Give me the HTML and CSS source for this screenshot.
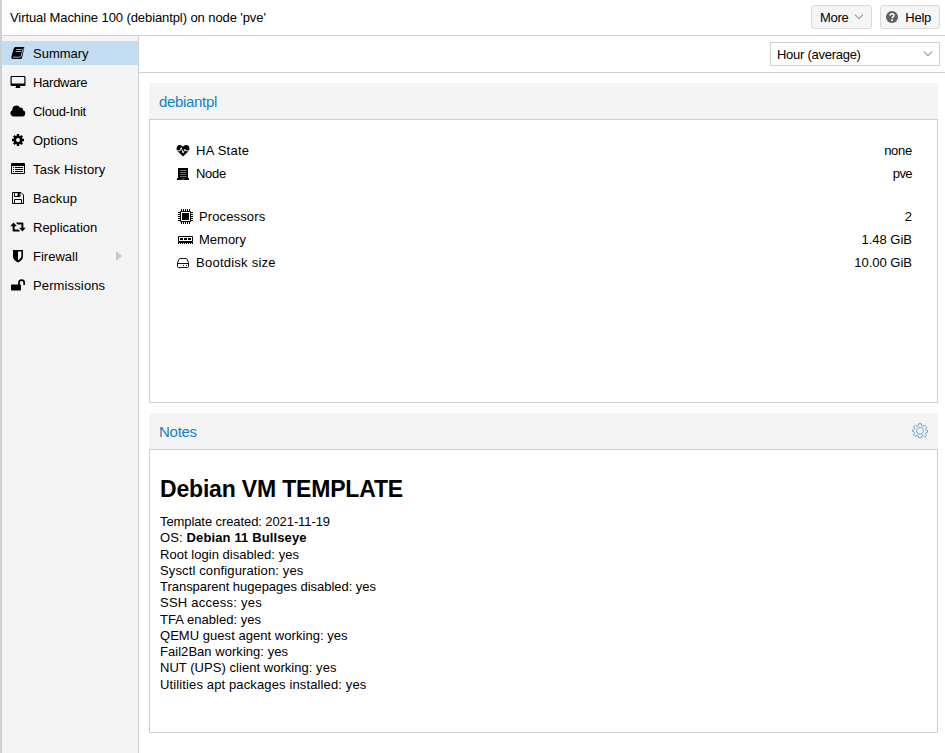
FILE: index.html
```html
<!DOCTYPE html>
<html lang="en">
<head>
<meta charset="utf-8">
<title>Virtual Machine 100</title>
<link rel="stylesheet" href="styles.css">
</head>
<body>
<div class="app">
  <header class="topbar">
    <h1 class="title">Virtual Machine 100 (debiantpl) on node 'pve'</h1>
    <button class="btn btn-more"><span class="tight">More</span> <svg width="10" height="6" viewBox="0 0 10 6"><path class="chev" d="M1 .7l4 4 4-4"/></svg></button>
    <button class="btn btn-help"><svg width="12" height="12" viewBox="0 0 12 12"><circle cx="6" cy="6" r="6" fill="#606060"/><path d="M4 4.6C4.1 2.3 8 2.3 8 4.5 8 6 6.1 5.8 6.1 7.3" fill="none" stroke="#f5f5f5" stroke-width="1.6"/><path d="M5.2 8.2h1.8v1.7H5.2z" fill="#f5f5f5"/></svg><span class="tight">Help</span></button>
  </header>
  <div class="main">
    <nav class="side">
      <a class="item active"><svg class="ico" viewBox="0 0 16 14"><path d="M5.5 1h8.2q.8 0 .6.8L12 11.7q-.3 1.3-1.6 1.3H3Q1 13 1.300 11l2.400-8.500Q4.100 1 5.500 1z"/><path class="cut-blue" d="M6.200 3.500h5.600M5.600 5.500h5.600M3 11.200h7q.8 0 1-.8l2.200-8"/></svg><span>Summary</span></a>
      <a class="item"><svg class="ico" viewBox="0 0 16 14"><path fill-rule="evenodd" d="M1.500 1h13q1 0 1 1v8q0 1-1 1H10v1.200l1 .8H5l1-.8V11H1.500q-1 0-1-1V2q0-1 1-1zM1.700 2v6.500h12.600V2z"/></svg><span class="tight">Hardware</span></a>
      <a class="item"><svg class="ico" viewBox="0 0 16 14"><path d="M3.700 12.500A3.400 3.400 0 0 1 2.400 6 4 4 0 0 1 9.900 3.700 2.200 2.200 0 0 1 12.900 6.200 3.200 3.200 0 0 1 12.500 12.500z"/></svg><span class="tight">Cloud-Init</span></a>
      <a class="item"><svg class="ico" viewBox="0 0 16 14"><circle cx="8" cy="7" r="3.200" fill="none" stroke="#000" stroke-width="2.500"/><path d="M8 1v2.500M8 10.500V13M2 7h2.500M11.500 7H14M3.800 2.800l1.700 1.700M10.500 9.500l1.700 1.700M12.200 2.800l-1.700 1.700M5.500 9.500l-1.700 1.700" stroke="#000" stroke-width="2.400" fill="none"/></svg><span>Options</span></a>
      <a class="item"><svg class="ico" viewBox="0 0 16 14"><path fill-rule="evenodd" d="M2 1h12q1 0 1 1v9q0 1-1 1H2q-1 0-1-1V2q0-1 1-1zM2 4v7h12V4z"/><path d="M3 5h1v1H3zM5 5h8v1H5zM3 7h1v1H3zM5 7h8v1H5zM3 9h1v1H3zM5 9h8v1H5z"/></svg><span class="loose">Task History</span></a>
      <a class="item"><svg class="ico" viewBox="0 0 16 14"><path class="line" d="M2.500 1.500h8.500l2.500 2.500v8.500h-11zM4.500 12V8.500h7V12M4.500 1.500v4h5.500v-4"/><path d="M7.500 2h2v3h-2z"/></svg><span class="loose">Backup</span></a>
      <a class="item"><svg class="ico" viewBox="0 0 16 14"><path d="M3.500 2.500L7 6.200H4.600V9.500H8.500l1.700 2H3.500q-.9 0-.9-.9V6.200H.2zM5.800 2.500h6.700q.9 0 .9.900v4.400h2.400L12.400 11.500 9 7.800h2.400V4.500H7.500z"/></svg><span>Replication</span></a>
      <a class="item"><svg class="ico" viewBox="0 0 16 14"><path fill-rule="evenodd" d="M3 1h10v6.500Q13 11 8 13.400 3 11 3 7.500zM8 2.600v8.900Q11.400 9.500 11.400 7.300V2.600z"/></svg><span>Firewall</span><i class="arrow"></i></a>
      <a class="item"><svg class="ico" viewBox="0 0 16 14"><path d="M1.700 6.500h8.600q.7 0 .7.700v4.600q0 .7-.7.700H1.700q-.7 0-.7-.7V7.200q0-.7.700-.7z"/><path d="M9 7V4.700a2.600 2.600 0 0 1 5.200 0V7" fill="none" stroke="#000" stroke-width="1.700"/></svg><span class="loose">Permissions</span></a>
    </nav>
    <div class="content">
      <div class="toolbar">
        <div class="select"><span class="tight">Hour (average)</span><svg width="10" height="6" viewBox="0 0 10 6"><path class="chev" d="M1 .7l4 4 4-4"/></svg></div>
      </div>
      <div class="panels">
        <section class="panel">
          <div class="phead"><span class="name">debiantpl</span></div>
          <div class="pbody status">
            <div class="row"><svg class="sico" width="14" height="14" viewBox="0 0 14 14"><path d="M7 12.500L1.500 7.200C-.5 5 .8 1 3.700 1 5.300 1 6.200 1.800 7 2.700 7.800 1.800 8.700 1 10.300 1c2.900 0 4.200 4 2.200 6.200z"/><path d="M0 6.800h4l1.200-3.200 1.900 5.400L8.800 5.200l.8 1.600H14" fill="none" stroke="#fff" stroke-width=".9"/></svg><span class="looser">HA State</span><b class="tight">none</b></div>
            <div class="row"><svg class="sico" width="14" height="14" viewBox="0 0 14 14"><path d="M2 1h10v10h1v2H1v-2h1z"/><path d="M4 3.500h6.500M4 5.500h6.500M4 7.500h6.500M4 9.500h6.500M5.500 12h3" stroke="#888" stroke-width=".8"/></svg><span class="tight">Node</span><b class="tighter">pve</b></div>
            <div class="row gap"><svg class="sico wide" width="16" height="16" viewBox="0 0 16 16"><path d="M4 4h7v7H4z"/><path class="line" d="M2.500 2.500h10v10h-10z"/><path class="line" d="M3.500 0v2M5.500 0v2M7.500 0v2M9.500 0v2M11.500 0v2M3.500 13v2M5.500 13v2M7.500 13v2M9.500 13v2M11.500 13v2M0 3.500h2M0 5.500h2M0 7.500h2M0 9.500h2M0 11.500h2M13 3.500h2M13 5.500h2M13 7.500h2M13 9.500h2M13 11.500h2"/></svg><span class="loose">Processors</span><b>2</b></div>
            <div class="row"><svg class="sico wide" width="16" height="16" viewBox="0 0 16 16"><path class="line" d="M.5 4.500h14v5H.5z"/><path d="M2 6h3v2H2zM6 6h3v2H6zM10 6h3v2h-3zM0 10h1v2H0zM2 10h1v2H2zM4 10h1v2H4zM6 10h1v2H6zM8 10h1v2H8zM10 10h1v2h-1zM12 10h1v2h-1zM14 10h1v2h-1zM0 10h15v1H0z"/></svg><span>Memory</span><b>1.48 GiB</b></div>
            <div class="row"><svg class="sico" width="14" height="14" viewBox="0 0 14 14"><path d="M1.500 6.500L3.200 3Q3.400 2.500 4 2.500h6q.6 0 .8.500l1.700 3.500v4q0 1-1 1h-9q-1 0-1-1zM1.500 7.500h11" fill="none" stroke="#111" stroke-width="1"/><path d="M7 9h1v1H7zM10 9h1v1h-1z"/></svg><span class="looser">Bootdisk size</span><b>10.00 GiB</b></div>
          </div>
        </section>
        <section class="panel">
          <div class="phead"><span class="tight">Notes</span><svg class="gear" width="16" height="16" viewBox="0 0 16 16"><path d="M6.700.7h2.600l.4 2 1.300.5 1.700-1.100 1.900 1.900-1.100 1.700.5 1.300 1.500.3v1.900l-1.500.4-.5 1.400 1.100 1.600-1.900 1.800L11 12.300l-1.300.6-.4 2H6.700l-.4-2-1.400-.6-1.600 1.100-1.900-1.800 1.100-1.700L2 8.700.5 8.400V7.100l1.500-.4.500-1.400L1.400 4l1.900-1.900 1.600 1.100 1.400-.5z"/><circle cx="8" cy="7.800" r="3.500"/></svg></div>
          <div class="pbody notes">
            <h2>Debian VM TEMPLATE</h2>
            <p><span class="close">Template created: 2021-11-19</span><br><span class="loose">OS: <strong>Debian 11 Bullseye</strong></span><br>Root login disabled: yes<br><span class="loose">Sysctl configuration: yes</span><br><span class="flat">Transparent hugepages disabled: yes</span><br><span class="looser">SSH access: yes</span><br>TFA enabled: yes<br>QEMU guest agent working: yes<br>Fail2Ban working: yes<br>NUT (UPS) client working: yes<br><span class="loose">Utilities apt packages installed: yes</span></p>
          </div>
        </section>
      </div>
    </div>
  </div>
</div>
</body>
</html>
```
FILE: styles.css
```css
* { box-sizing: border-box; }
body { margin: 0; background: #fff; color: #000; font: 13px/17px "Liberation Sans", Arial, sans-serif; }
.app { height: 753px; border-left: 2px solid #cfcfcf; display: flex; flex-direction: column; overflow: hidden; }
.topbar { height: 36px; flex: none; border-bottom: 1px solid #cfcfcf; display: flex; align-items: center; gap: 8px; padding: 0 5px 1px 8px; }
.title { flex: 1; margin: 0; font-size: 13px; font-weight: normal; letter-spacing: -.09px; }
.tight { letter-spacing: -.27px; }
.tighter { letter-spacing: -.6px; }
.close { letter-spacing: -.09px; }
.flat { letter-spacing: -.03px; }
.loose { letter-spacing: .13px; }
.looser { letter-spacing: .25px; }
.btn { height: 24px; border: 1px solid #d8d8d8; border-radius: 3px; background: #f5f5f5; font: inherit; color: #000; display: flex; align-items: center; justify-content: space-between; }
.btn-more { width: 61px; padding: 0 7px 0 8px; }
.btn-help { width: 60px; padding: 0 8px 0 5px; }
.chev { fill: none; stroke: #999; stroke-width: 1.2; }
.main { flex: 1; display: flex; min-height: 0; }
.side { width: 137px; flex: none; background: #f4f4f4; border-right: 1px solid #cfcfcf; padding-top: 5px; display: flex; flex-direction: column; gap: 5px; }
.item { height: 24px; display: flex; align-items: center; gap: 7px; padding-left: 8px; }
.active { background: #c2dcf1; }
.ico { width: 16px; height: 14px; flex: none; }
.line { fill: none; stroke: #000; stroke-width: 1; }
.cut-blue { fill: none; stroke: #c2dcf1; stroke-width: .8; }
.arrow { margin-left: auto; margin-right: 16px; border: 5px solid transparent; border-left: 6px solid #c8c8c8; border-right: 0; }
.content { flex: 1; display: flex; flex-direction: column; }
.toolbar { height: 37px; border-bottom: 1px solid #cfcfcf; display: flex; justify-content: flex-end; align-items: center; padding: 0 5px 0 0; }
.select { width: 170px; height: 24px; border: 1px solid #cfcfcf; display: flex; align-items: center; justify-content: space-between; padding: 0 6px; }
.select svg { margin-bottom: 1px; }
.panels { padding: 10px 7px 0 10px; display: flex; flex-direction: column; gap: 10px; }
.panel { height: 320px; display: flex; flex-direction: column; }
.phead { height: 36px; flex: none; background: #f4f4f4; color: #157fcc; font-size: 15px; line-height: 20px; padding: 1px 10px 0; display: flex; align-items: center; justify-content: space-between; }
.name { letter-spacing: -.33px; }
.gear { fill: none; stroke: #69a8dc; stroke-width: 1; margin-bottom: 2px; }
.pbody { flex: 1; border: 1px solid #cfcfcf; }
.status { padding: 19px 25px 0 26px; }
.row { height: 23px; display: flex; align-items: center; }
.row b { margin-left: auto; font-weight: normal; }
.sico { margin-right: 6px; }
.wide { margin: 0 4px 0 2px; }
.row .wide + span { margin-left: 1px; }
.gap { margin-top: 20px; }
.notes { padding: 25px 10px; line-height: 16.25px; }
.notes h2 { margin: 0 0 11px; font-size: 23px; line-height: 28px; letter-spacing: -.18px; }
.notes p { margin: 0; letter-spacing: .04px; }
```
